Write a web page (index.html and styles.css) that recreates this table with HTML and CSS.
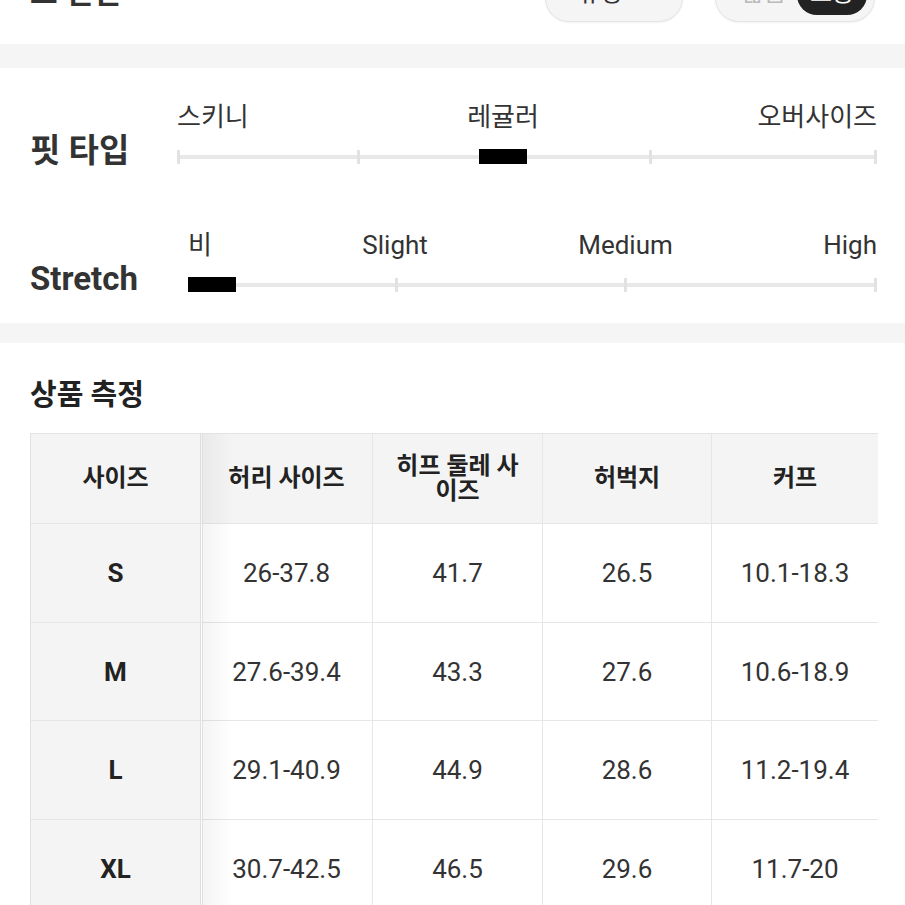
FILE: index.html
```html
<!DOCTYPE html>
<html lang="ko">
<head>
<meta charset="utf-8">
<title>상품 정보</title>
<link rel="stylesheet" href="styles.css">
</head>
<body>
<div class="top">
  <div class="top-title">드 렌렌</div>
  <div class="pills">
    <div class="pill pill-plain"><span class="pill-text">유형</span></div>
    <div class="pill pill-toggle">
      <span class="opt">얇음</span>
      <span class="opt opt-active">보통</span>
    </div>
  </div>
</div>
<div class="band band-a"></div>
<section class="fit">
  <div class="fit-row fit-type">
    <div class="fit-title">핏 타입</div>
    <div class="labels"><span>스키니</span><span>레귤러</span><span>오버사이즈</span></div>
    <div class="track-wrap">
      <div class="track">
        <span class="tick" style="left:0"></span>
        <span class="tick" style="left:25.7%"></span>
        <span class="tick" style="left:67.4%"></span>
        <span class="tick tick-end"></span>
        <span class="marker" style="left:43.1%"></span>
      </div>
    </div>
  </div>
  <div class="fit-row fit-stretch">
    <div class="fit-title">Stretch</div>
    <div class="labels"><span>비</span><span>Slight</span><span>Medium</span><span>High</span></div>
    <div class="track-wrap">
      <div class="track">
        <span class="tick" style="left:30%"></span>
        <span class="tick" style="left:63.3%"></span>
        <span class="tick tick-end"></span>
        <span class="marker" style="left:0"></span>
      </div>
    </div>
  </div>
</section>
<div class="band band-b"></div>
<section class="measure">
  <h2 class="measure-title">상품 측정</h2>
  <div class="table-wrap">
    <table class="size-table">
      <colgroup>
        <col class="c1"><col class="c2"><col class="c3"><col class="c4"><col class="c5">
      </colgroup>
      <thead>
        <tr class="head-row">
          <th class="first">사이즈</th>
          <th>허리 사이즈</th>
          <th>히프 둘레 사이즈</th>
          <th>허벅지</th>
          <th>커프</th>
        </tr>
      </thead>
      <tbody>
        <tr class="body-row"><td class="first">S</td><td>26-37.8</td><td>41.7</td><td>26.5</td><td>10.1-18.3</td></tr>
        <tr class="body-row"><td class="first">M</td><td>27.6-39.4</td><td>43.3</td><td>27.6</td><td>10.6-18.9</td></tr>
        <tr class="body-row"><td class="first">L</td><td>29.1-40.9</td><td>44.9</td><td>28.6</td><td>11.2-19.4</td></tr>
        <tr class="body-row"><td class="first">XL</td><td>30.7-42.5</td><td>46.5</td><td>29.6</td><td>11.7-20</td></tr>
      </tbody>
    </table>
  </div>
</section>
</body>
</html>
```
FILE: styles.css
```css
* { box-sizing: border-box; margin: 0; padding: 0; }
html, body { background: #fff; }
body {
  width: 905px;
  height: 905px;
  overflow: hidden;
  font-family: Roboto, "Noto Sans CJK KR", sans-serif;
  color: #333;
}

/* top strip (cut off by the viewport) */
.top {
  height: 44px;
  overflow: hidden;
  display: flex;
  justify-content: space-between;
  align-items: flex-end;
  padding: 0 30px 22px 30px;
}
.top-title {
  font-size: 30px;
  font-weight: 700;
  line-height: 36px;
  color: #333;
  margin-bottom: 11px;
  white-space: nowrap;
}
.pills { display: flex; gap: 32px; }
.pill {
  height: 54px;
  border-radius: 24px;
  background: #f5f5f5;
  border: 1px solid #e4e4e4;
  box-shadow: 0 1px 2px rgba(0,0,0,0.05);
  display: flex;
  align-items: center;
  font-size: 24px;
  white-space: nowrap;
}
.pill-plain { width: 138px; justify-content: center; color: #333; }
.pill-plain .pill-text { margin: 0 28px 10px 0; }
.pill-toggle {
  width: 160px;
  justify-content: space-between;
  padding: 6px 7px 6px 26px;
  color: #bbb;
}
.opt {
  display: flex;
  align-items: center;
  justify-content: center;
  height: 100%;
  padding-bottom: 10px;
}
.opt-active {
  width: 70px;
  border-radius: 20px;
  background: #222;
  color: #fff;
}

.band { background: #f5f5f5; }
.band-a { height: 24px; }
.band-b { height: 20px; }

/* fit section */
.fit {
  padding: 34px 28px 23px 30px;
  display: flex;
  flex-direction: column;
  gap: 58px;
}
.fit-row {
  display: grid;
  grid-template-columns: 147px 1fr;
  grid-template-rows: 30px 30px;
  row-gap: 10px;
}
.fit-stretch { grid-template-columns: 158px 1fr; }
.fit-title {
  grid-column: 1;
  grid-row: 2;
  align-self: center;
  font-size: 33px;
  font-weight: 700;
  line-height: 40px;
  color: #333;
  margin-bottom: 12px;
  white-space: nowrap;
}
.labels {
  grid-column: 2;
  grid-row: 1;
  display: flex;
  justify-content: space-between;
  font-size: 26px;
  line-height: 30px;
  color: #333;
  white-space: nowrap;
}
.track-wrap {
  grid-column: 2;
  grid-row: 2;
  display: flex;
  align-items: center;
}
.track {
  position: relative;
  width: 100%;
  height: 4px;
  background: #e8e8e8;
}
.tick {
  position: absolute;
  top: -5px;
  width: 3px;
  height: 14px;
  background: #e2e2e2;
}
.tick-end { right: 0; }
.marker {
  position: absolute;
  top: -6px;
  width: 48px;
  height: 15px;
  background: #000;
}

/* measurement section */
.measure { padding: 34px 0 0 30px; }
.measure-title {
  font-size: 29px;
  font-weight: 700;
  line-height: 36px;
  color: #222;
  margin-bottom: 20px;
}
.table-wrap { width: 848px; overflow: hidden; }
.size-table {
  width: 848px;
  table-layout: fixed;
  border-collapse: separate;
  border-spacing: 0;
  border-top: 1px solid #e2e2e2;
  border-left: 1px solid #e2e2e2;
}
.c1 { width: 170px; }
.c2 { width: 172px; }
.c3 { width: 170px; }
.c4 { width: 169px; }
.c5 { width: 167px; }
.size-table th,
.size-table td {
  border-right: 1px solid #e6e6e6;
  border-bottom: 1px solid #e6e6e6;
  text-align: center;
  vertical-align: middle;
  padding: 0 16px;
}
.head-row { height: 90px; }
.body-row { height: 98.7px; }
.size-table th {
  background: #f4f4f4;
  font-size: 24px;
  font-weight: 700;
  line-height: 25px;
  color: #222;
}
.size-table td {
  font-size: 26px;
  color: #333;
}
.size-table .first {
  background: #f4f4f4;
  font-weight: 700;
  color: #222;
  position: relative;
  border-right-color: #dedede;
}
.size-table .first::after {
  content: "";
  position: absolute;
  top: 0;
  bottom: -1px;
  left: 100%;
  width: 34px;
  z-index: 1;
  background: linear-gradient(to right, transparent 0, transparent 2px, #e0e0e0 2px, #e0e0e0 3px, rgba(0,0,0,0.045) 3px, rgba(0,0,0,0) 34px);
}
```
